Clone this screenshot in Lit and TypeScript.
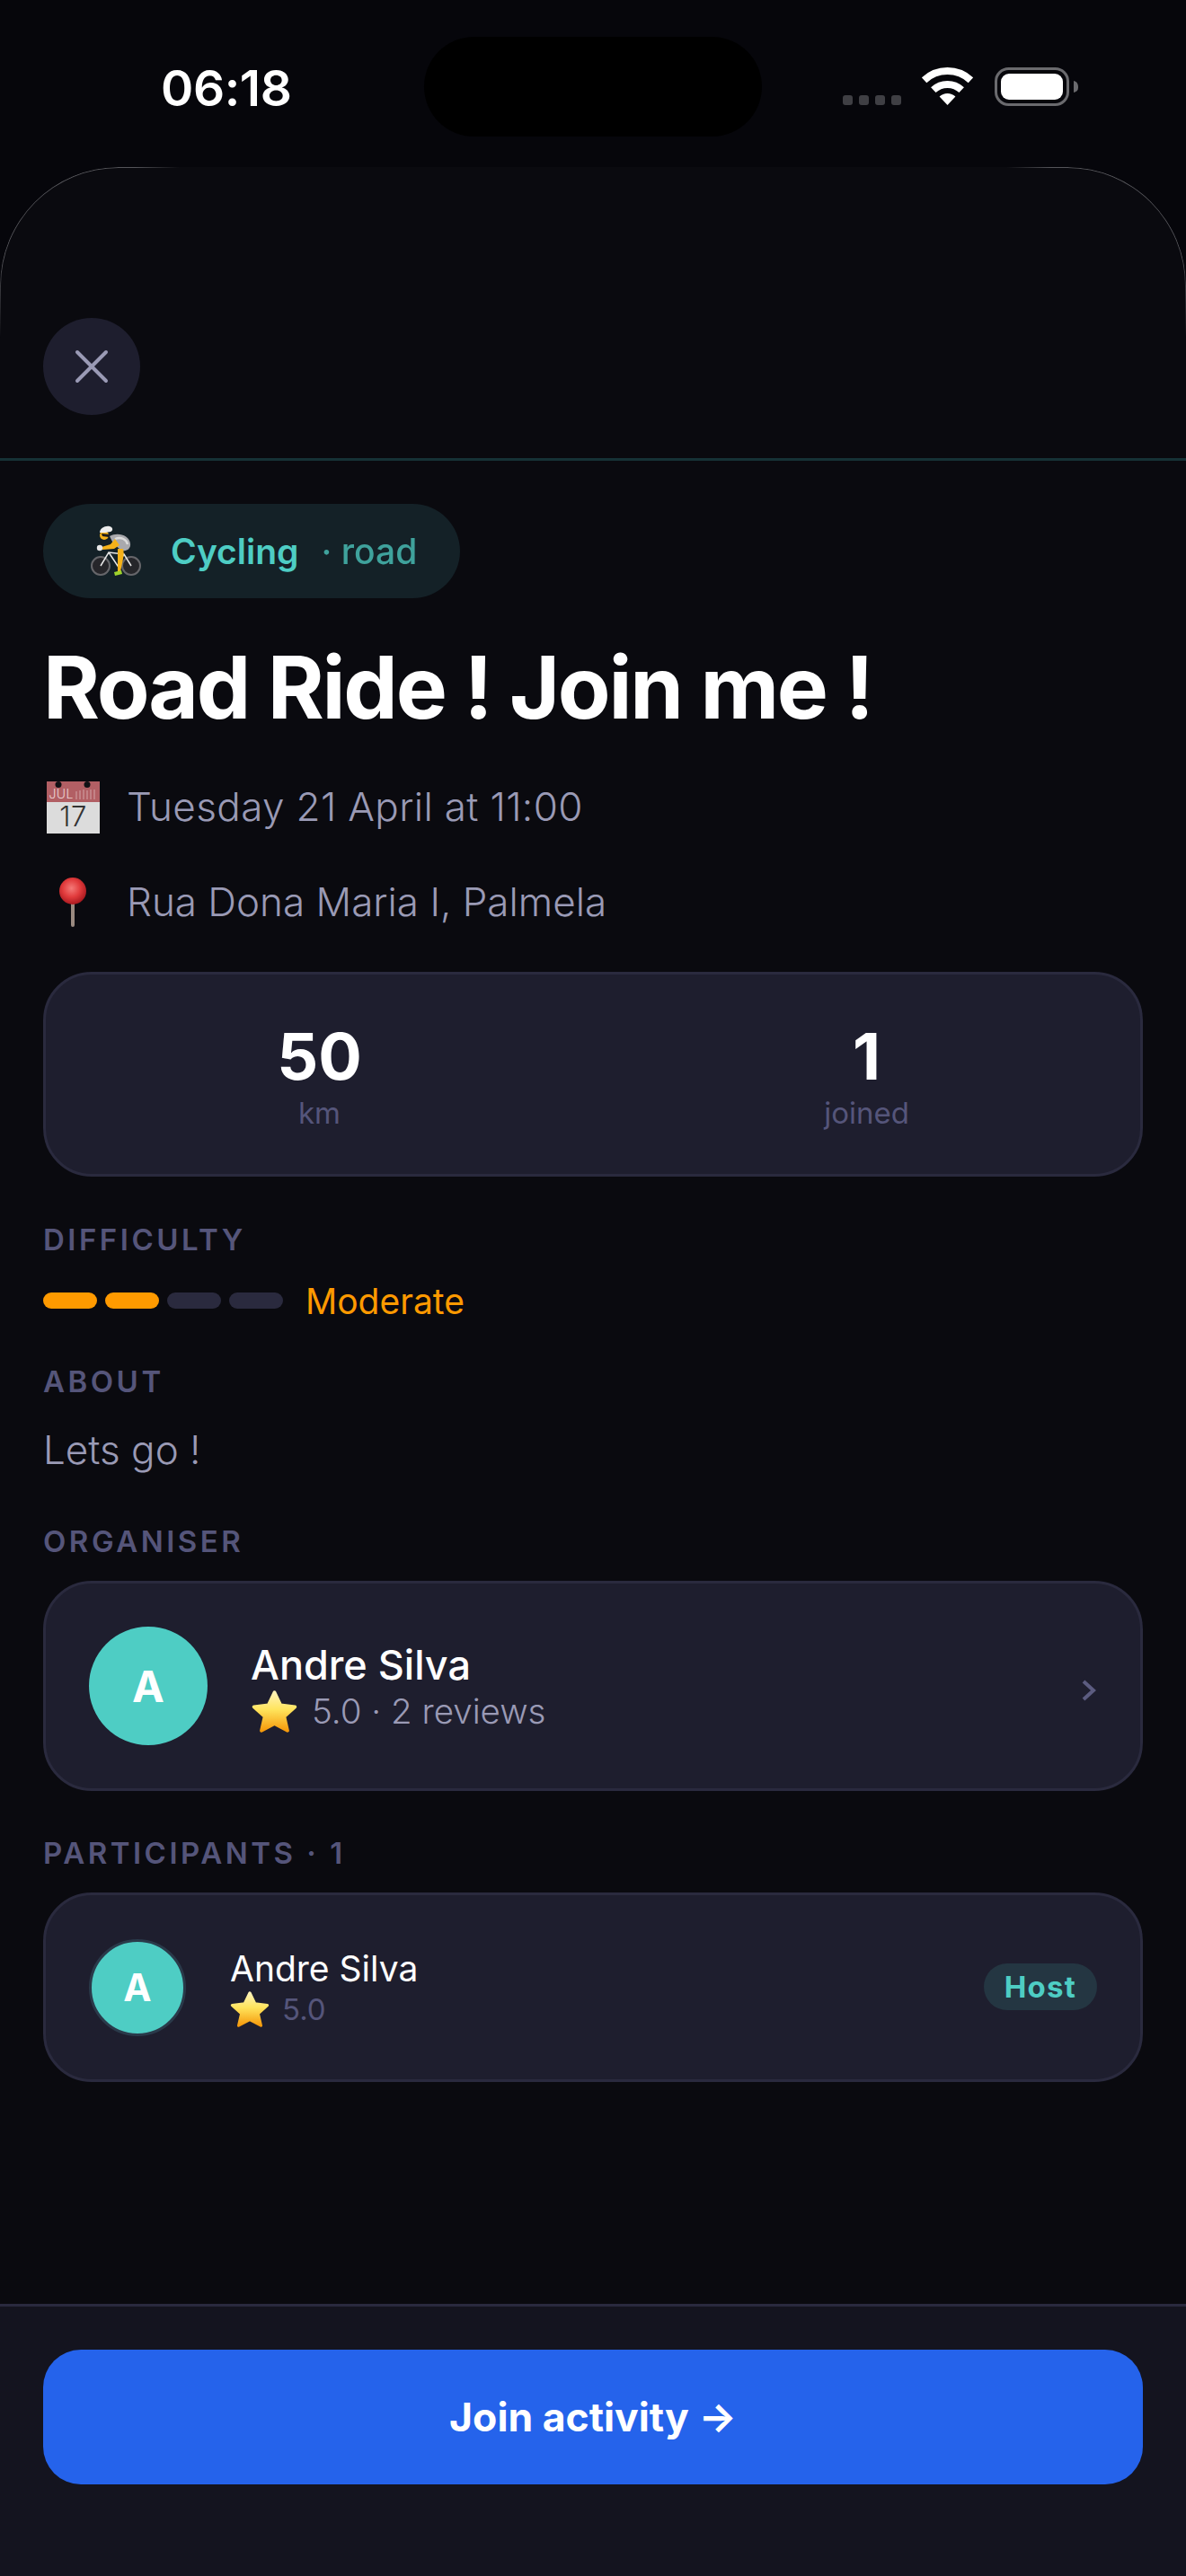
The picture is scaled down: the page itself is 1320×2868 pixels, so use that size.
import { LitElement, html, css, svg } from 'lit';
import { customElement } from 'lit/decorators.js';
import { classMap } from 'lit/directives/class-map.js';

const starIcon = (w: number, h: number) => html`
  <svg class="star" width=${w} height=${h} viewBox="0 0 49 45">
    <defs>
      <linearGradient id="starFill" x1="0" y1="0" x2="0" y2="1">
        <stop offset="0" stop-color="#fff3b8" />
        <stop offset="0.45" stop-color="#ffe45c" />
        <stop offset="1" stop-color="#f59a0c" />
      </linearGradient>
    </defs>
    <path
      d="M24.5 2 L31 15.5 L46.5 17.5 L35 28 L38.5 43 L24.5 35.5 L10.5 43 L14 28 L2.5 17.5 L18 15.5 Z"
      fill="url(#starFill)"
      stroke="url(#starFill)"
      stroke-width="3.5"
      stroke-linejoin="round"
    />
  </svg>
`;

const cyclistIcon = svg`
  <circle cx="11" cy="45" r="10" fill="#26262a" stroke="#66666a" stroke-width="2" />
  <circle cx="45" cy="45" r="10" fill="#26262a" stroke="#66666a" stroke-width="2" />
  <path d="M11 45 L20 30 L37 32 L45 45 M20 30 L30 45 L37 32" fill="none" stroke="#e8e8e8" stroke-width="1.5" />
  <path d="M21 12 C30 7 43 11 44 20 C45 27 38 30 33 27 L25 20 Z" fill="#a9a9ad" />
  <path d="M27 15 C34 12 40 16 41 21" fill="none" stroke="#dcdcdc" stroke-width="2.4" />
  <path d="M36 26 C38 32 35 41 33 52 L30 52 C30 42 30 33 30 26 Z" fill="#f5b21a" />
  <path d="M27 15 L22 21 L12 24 L13 27 L26 26 L32 22 Z" fill="#f5b21a" />
  <circle cx="10" cy="25" r="3.2" fill="#e8e8e8" />
  <circle cx="15" cy="11" r="5" fill="#f5b21a" />
  <path d="M12 9 L21 10 L20 13 L13 12 Z" fill="#1c1c1c" />
  <path d="M10 8 C10 3 16 0 21 1 C25 2 25 6 22 7 C18 8 14 8 10 8 Z" fill="#ececec" />
  <path d="M26 52 L34 50 L35 54 L27 56 Z" fill="#9ed32c" />
`;

const pinIcon = svg`
  <defs>
    <radialGradient id="pinHead" cx="0.45" cy="0.4" r="0.6">
      <stop offset="0" stop-color="#f47a78" />
      <stop offset="0.55" stop-color="#e13b3c" />
      <stop offset="1" stop-color="#a9191f" />
    </radialGradient>
  </defs>
  <rect x="13" y="26" width="4" height="29" rx="2" fill="#9a8a80" />
  <circle cx="15" cy="15" r="15" fill="url(#pinHead)" />
`;

const calendarIcon = svg`
  <rect x="0" y="0" width="59" height="58" fill="#dcdcdc" />
  <rect x="0" y="0" width="59" height="23" fill="#b25f64" />
  <circle cx="13" cy="3.6" r="3.5" fill="#101014" />
  <circle cx="45" cy="3.6" r="3.5" fill="#101014" />
  <text x="2.5" y="19" font-family="Inter, sans-serif" font-size="14" fill="#ecd4d4">JUL</text>
  <path d="M33 11V20M37 10V20M41 9V20M45 10V20M49 9V20M53 9V20" stroke="#cf9a9d" stroke-width="1.2" />
  <text x="29.5" y="50" text-anchor="middle" font-family="Inter, sans-serif" font-size="31" fill="#333">17</text>
`;

@customElement('app-root')
export class AppRoot extends LitElement {
  static styles = css`
    :host {
      display: block;
      width: 1320px;
      height: 2868px;
      background: #06060b;
      font-family: Inter, 'Noto Sans', sans-serif;
      color: #fff;
      overflow: hidden;
    }

    .status {
      height: 186px;
      display: grid;
      grid-template-columns: 472px 376px 1fr;
    }
    .time {
      padding: 71px 0 0 179px;
      font-size: 55px;
      line-height: 54px;
      font-weight: 600;
      letter-spacing: -0.4px;
    }
    .island {
      height: 111px;
      margin-top: 41px;
      background: #000;
      border-radius: 56px;
    }
    .indicators {
      display: flex;
      align-items: flex-start;
      padding: 75px 0 0 90px;
    }
    .dots {
      display: flex;
      gap: 7px;
      margin: 31px 23px 0 0;
    }
    .dots span {
      width: 11px;
      height: 11px;
      border-radius: 3px;
      background: #3f3f44;
    }
    .wifi {
      margin-right: 24px;
    }

    .sheet {
      position: relative;
      height: 2682px;
      display: flex;
      flex-direction: column;
      background: #0a0a0f;
      border-radius: 132px 132px 0 0;
    }
    .sheet::before {
      content: '';
      position: absolute;
      inset: 0 0 auto 0;
      height: 200px;
      border: 1.5px solid #55555a;
      border-bottom: 0;
      border-radius: 132px 132px 0 0;
      -webkit-mask-image: linear-gradient(90deg, #000 0, #000 150px, transparent 200px, transparent 1120px, #000 1170px, #000 100%),
        linear-gradient(180deg, #000 0, #000 100px, transparent 190px);
      -webkit-mask-composite: source-in;
      mask-composite: intersect;
      pointer-events: none;
    }
    .sheet-head {
      height: 327px;
      flex: none;
      box-sizing: border-box;
      padding: 168px 0 0 48px;
      border-bottom: 3px solid #163236;
    }
    .close {
      width: 108px;
      height: 108px;
      border: 0;
      padding: 0;
      border-radius: 50%;
      background: #1e1e2e;
      display: flex;
      align-items: center;
      justify-content: center;
    }

    .content {
      flex: 1;
      padding: 48px 48px 0;
    }

    .pill {
      display: inline-flex;
      align-items: center;
      height: 105px;
      padding: 0 48px 0 53px;
      border-radius: 53px;
      background: #142127;
      font-size: 39px;
      color: #4ecdc4;
    }
    .pill svg {
      margin-right: 33px;
    }
    .pill b {
      font-weight: 600;
    }
    .pill i {
      font-style: normal;
      font-weight: 500;
      opacity: 0.75;
      margin-left: 25px;
    }

    h1 {
      margin: 44px 0 0;
      font-size: 96px;
      line-height: 110px;
      font-weight: 700;
      letter-spacing: -2.2px;
    }

    .meta {
      display: flex;
      align-items: center;
      height: 64px;
      font-size: 44px;
      font-weight: 300;
      color: #9a9ab5;
    }
    .meta.first {
      margin-top: 46px;
      letter-spacing: 0.36px;
    }
    .meta + .meta {
      margin-top: 42px;
    }
    .meta .icon {
      width: 93px;
      flex: none;
      display: flex;
    }
    .meta .icon.cal {
      padding-left: 4px;
      width: 89px;
    }
    .meta .icon.pin {
      padding-left: 18px;
      width: 75px;
    }
    .meta .icon svg {
      margin-top: 2px;
      overflow: visible;
    }

    .card {
      box-sizing: border-box;
      background: #1e1e2e;
      border: 3px solid #2a2a3e;
      border-radius: 54px;
    }
    .stats {
      height: 228px;
      margin-top: 46px;
      padding-top: 6px;
      display: flex;
      align-items: center;
    }
    .stat {
      flex: 1;
      text-align: center;
    }
    .stat strong {
      display: block;
      font-size: 72px;
      line-height: 80px;
      font-weight: 700;
    }
    .stat span {
      display: block;
      font-size: 33px;
      line-height: 46px;
      color: #55557a;
    }

    .label {
      font-size: 33px;
      line-height: 40px;
      font-weight: 600;
      letter-spacing: 3.5px;
      color: #55557a;
    }
    .label.difficulty {
      margin-top: 50px;
    }
    .label.about {
      margin-top: 44px;
    }
    .label.organiser {
      margin-top: 52px;
    }
    .label.participants {
      margin-top: 49px;
    }

    .difficulty-row {
      display: flex;
      align-items: center;
      margin-top: 22px;
      height: 52px;
      gap: 9px;
    }
    .bar {
      width: 60px;
      height: 18px;
      border-radius: 9px;
      background: #2a2a3e;
    }
    .bar.on {
      background: #ff9a00;
    }
    .difficulty-row span {
      margin-left: 16px;
      font-size: 39px;
      font-weight: 400;
      color: #ff9a00;
    }

    .about-text {
      margin-top: 26px;
      font-size: 44px;
      font-weight: 300;
      line-height: 60px;
      color: #9a9ab5;
    }

    .person {
      display: flex;
      align-items: center;
      margin-top: 24px;
      padding: 48px;
    }
    .avatar {
      flex: none;
      display: flex;
      align-items: center;
      justify-content: center;
      width: 132px;
      height: 132px;
      border-radius: 50%;
      background: #4ecdc4;
      font-size: 48px;
      font-weight: 700;
      margin-right: 48px;
    }
    .info {
      flex: 1;
      padding-top: 2px;
    }
    .name {
      font-size: 45px;
      line-height: 54px;
      font-weight: 500;
    }
    .rating {
      display: flex;
      align-items: center;
      font-size: 38.5px;
      font-weight: 300;
      line-height: 48px;
      color: #9a9ab5;
    }
    .rating .star {
      margin: 0 16px 0 1px;
    }
    .chevron {
      margin: 10px 1px 0 0;
    }

    .person.small {
      padding: 48.5px 48px;
      margin-top: 24px;
    }
    .person.small .avatar {
      box-sizing: border-box;
      width: 108px;
      height: 108px;
      font-size: 42px;
      margin-right: 49px;
      border: 3px solid #2a3a4a;
    }
    .person.small .info {
      padding-top: 0;
    }
    .person.small .name {
      font-size: 39px;
      line-height: 48px;
      font-weight: 400;
    }
    .person.small .rating {
      font-size: 33px;
      font-weight: 400;
      line-height: 42px;
      color: #55557a;
    }
    .person.small .rating .star {
      margin: 0 14px 0 0;
    }

    .host {
      padding: 0 23px;
      height: 52px;
      line-height: 52px;
      margin-bottom: 2px;
      border-radius: 26px;
      background: #243642;
      font-size: 33px;
      font-weight: 700;
      letter-spacing: 1.2px;
      color: #4ecdc4;
    }

    .footer {
      flex: none;
      box-sizing: border-box;
      height: 303px;
      padding: 48px 48px 0;
      background: #14141f;
      border-top: 3px solid #2a2a3e;
    }
    .join {
      display: block;
      width: 100%;
      height: 150px;
      border: 0;
      border-radius: 42px;
      background: #2563eb;
      color: #fff;
      font: 700 44.5px Inter, sans-serif;
    }
  `;

  render() {
    return html`
      <div class="status">
        <div class="time">06:18</div>
        <div class="island"></div>
        <div class="indicators">
          <div class="dots"><span></span><span></span><span></span><span></span></div>
          <svg class="wifi" width="57" height="42" viewBox="0 0 57 42">
            <path d="M2.6 14.2 A38 38 0 0 1 54.4 14.2 M12.8 25.2 A23 23 0 0 1 44.2 25.2" fill="none" stroke="#fff" stroke-width="8" />
            <path d="M28.5 42 L19.6 32.5 A13 13 0 0 1 37.4 32.5 Z" fill="#fff" />
          </svg>
          <svg width="94" height="44" viewBox="0 0 94 44">
            <rect x="1.5" y="1.5" width="80" height="40" rx="14" fill="none" stroke="#6a6a6e" stroke-width="3" />
            <rect x="7" y="7" width="69" height="29" rx="9" fill="#fff" />
            <path d="M88 15 C92 16 93 19 93 22 C93 25 92 27 88 28 Z" fill="#6a6a6e" />
          </svg>
        </div>
      </div>

      <div class="sheet">
        <div class="sheet-head">
          <button class="close" aria-label="Close">
            <svg width="40" height="40" viewBox="0 0 40 40">
              <path d="M4 4 L36 36 M36 4 L4 36" stroke="#9a9ab5" stroke-width="4" stroke-linecap="round" />
            </svg>
          </button>
        </div>

        <div class="content">
          <div class="pill">
            <svg width="56" height="57" viewBox="0 0 56 57">${cyclistIcon}</svg>
            <b>Cycling</b><i>· road</i>
          </div>

          <h1>Road Ride ! Join me !</h1>

          <div class="meta first">
            <span class="icon cal"><svg width="59" height="58" viewBox="0 0 59 58">${calendarIcon}</svg></span>
            Tuesday 21 April at 11:00
          </div>
          <div class="meta">
            <span class="icon pin"><svg width="30" height="56" viewBox="0 0 30 56">${pinIcon}</svg></span>
            Rua Dona Maria I, Palmela
          </div>

          <div class="card stats">
            <div class="stat"><strong>50</strong><span>km</span></div>
            <div class="stat"><strong>1</strong><span>joined</span></div>
          </div>

          <div class="label difficulty">DIFFICULTY</div>
          <div class="difficulty-row">
            ${[1, 2, 3, 4].map(n => html`<div class=${classMap({ bar: true, on: n <= 2 })}></div>`)}
            <span>Moderate</span>
          </div>

          <div class="label about">ABOUT</div>
          <div class="about-text">Lets go !</div>

          <div class="label organiser">ORGANISER</div>
          <div class="card person">
            <div class="avatar">A</div>
            <div class="info">
              <div class="name">Andre Silva</div>
              <div class="rating">${starIcon(51, 47)}5.0 · 2 reviews</div>
            </div>
            <svg class="chevron" width="16" height="24" viewBox="0 0 16 24">
              <path d="M2 2 L13 12 L2 22" fill="none" stroke="#5c5c80" stroke-width="4" />
            </svg>
          </div>

          <div class="label participants">PARTICIPANTS · 1</div>
          <div class="card person small">
            <div class="avatar">A</div>
            <div class="info">
              <div class="name">Andre Silva</div>
              <div class="rating">${starIcon(44, 40)}5.0</div>
            </div>
            <div class="host">Host</div>
          </div>
        </div>

        <div class="footer">
          <button class="join">Join activity →</button>
        </div>
      </div>
    `;
  }
}
